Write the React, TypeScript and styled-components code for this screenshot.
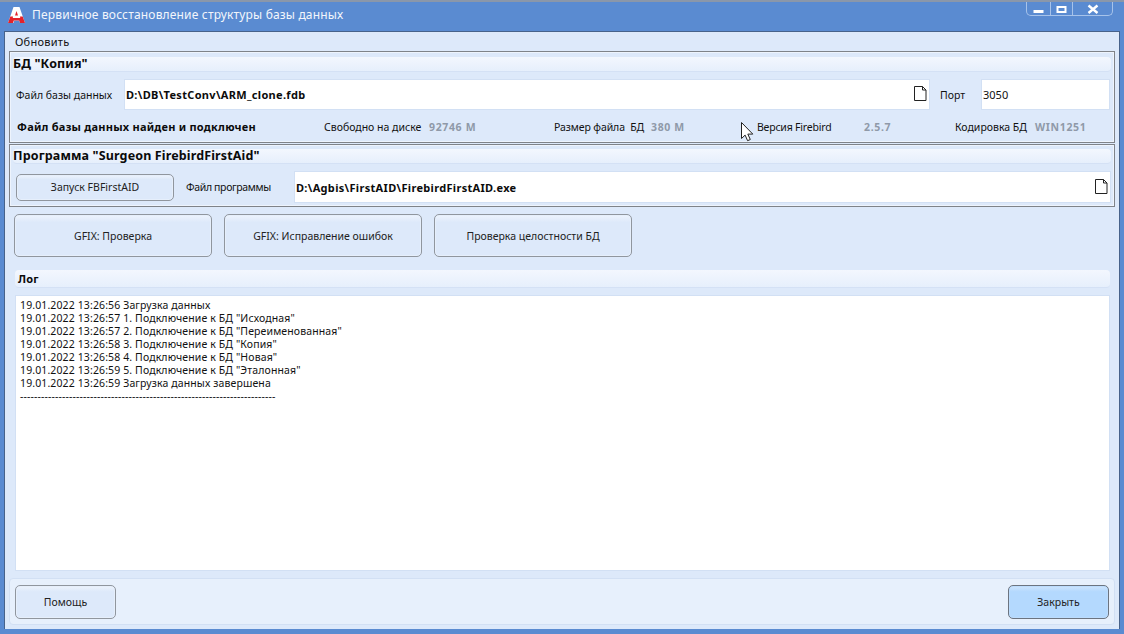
import React from "react";
import styled, { createGlobalStyle } from "styled-components";

const Global = createGlobalStyle`
  html, body { margin: 0; padding: 0; background: #5b8bd0; }
  * { box-sizing: border-box; }
`;

const Win = styled.div`
  position: relative;
  width: 1124px;
  height: 634px;
  overflow: hidden;
  display: flex;
  flex-direction: column;
  background: #5a8bd1;
  border-top: 2px solid #8a97aa;
  font-family: "Noto Sans", "Liberation Sans", sans-serif;
  font-size: 11px;
  color: #111;
`;
const TitleBar = styled.div`
  height: 29px;
  flex: none;
  display: flex;
  align-items: flex-start;
  padding-left: 8px;
  color: #f2f6fc;
`;
const Logo = styled.svg`
  width: 17px;
  height: 17px;
  margin-top: 5px;
  flex: none;
`;
const Title = styled.div`
  margin: 5px 0 0 7px;
  font-size: 12px;
  line-height: 16px;
  letter-spacing: 0.17px;
  flex: 1;
`;
const WinButtons = styled.div`
  display: flex;
  height: 14px;
  margin-right: 11px;
  border: 1px solid #a7c3ea;
  border-top: none;
  border-radius: 0 0 5px 5px;
`;
const WinBtn = styled.div<{ $w: number }>`
  width: ${(p) => p.$w}px;
  display: flex;
  align-items: flex-start;
  justify-content: center;
  & + & { border-left: 1px solid #a7c3ea; }
`;
const Client = styled.div`
  flex: 1;
  margin: 0 4px 5px 4px;
  background: #dde9fa;
  border: 1px solid #47628a;
  border-bottom: none;
  display: flex;
  flex-direction: column;
  min-height: 0;
`;
const Menu = styled.div`
  height: 19px;
  flex: none;
  padding: 2px 0 0 10px;
  line-height: 15px;
  letter-spacing: 0.25px;
`;
const Group = styled.section<{ $h: number; $pad: number }>`
  height: ${(p) => p.$h}px;
  flex: none;
  margin: 0 4px 1px 4px;
  border: 1px solid #7f8389;
  box-shadow: inset 0 0 0 1px #eef4fd;
  display: flex;
  flex-direction: column;
  padding: ${(p) => p.$pad}px 3px 0 3px;
`;
const Heading = styled.div`
  height: 15px;
  flex: none;
  border-radius: 4px;
  background: linear-gradient(#f3f7fe, #e6effc);
  border-bottom: 1px solid #d4e1f5;
  font-weight: 700;
  font-size: 12.5px;
  line-height: 14px;
  letter-spacing: 0.14px;
  color: #0b0b0b;
`;
const Row = styled.div<{ $top: number }>`
  display: flex;
  align-items: center;
  margin-top: ${(p) => p.$top}px;
`;
const Label = styled.span<{ $ml?: number; $w?: number; $ls?: number }>`
  margin-left: ${(p) => p.$ml ?? 0}px;
  width: ${(p) => (p.$w ? `${p.$w}px` : "auto")};
  flex: none;
  white-space: nowrap;
  font-size: 10.5px;
  letter-spacing: ${(p) => p.$ls ?? 0}px;
`;
const Value = styled.span<{ $w?: number }>`
  width: ${(p) => (p.$w ? `${p.$w}px` : "auto")};
  flex: none;
  font-weight: 700;
  font-size: 10.5px;
  letter-spacing: 0.65px;
  color: #8f99a8;
  white-space: nowrap;
`;
const Strong = styled.span`
  width: 307px;
  margin-left: 4px;
  flex: none;
  font-weight: 700;
  font-size: 11px;
  letter-spacing: 0.23px;
  color: #0b0b0b;
  white-space: nowrap;
`;
const Field = styled.div<{ $w: number; $h: number }>`
  width: ${(p) => p.$w}px;
  height: ${(p) => p.$h}px;
  flex: none;
  background: #fff;
  border: 1px solid #d2e0f4;
  display: flex;
  align-items: center;
  justify-content: space-between;
  padding: 0 2px 0 1px;
`;
const FieldBold = styled.span`
  font-weight: 700;
  font-size: 11px;
  letter-spacing: 0.32px;
  color: #0b0b0b;
`;
const FileIcon = styled.svg`
  width: 13px;
  height: 15px;
  flex: none;
  margin-top: -2px;
`;
const Btn = styled.button<{ $w: number; $h: number; $primary?: boolean; $ml?: number }>`
  width: ${(p) => p.$w}px;
  height: ${(p) => p.$h}px;
  margin-left: ${(p) => p.$ml ?? 0}px;
  flex: none;
  padding: 0;
  border: 1px solid ${(p) => (p.$primary ? "#6c7480" : "#90969e")};
  border-radius: 5px;
  background: ${(p) =>
    p.$primary
      ? "linear-gradient(#cfe5fd 0, #b4d9fe 18%, #b4d9fe 100%)"
      : "linear-gradient(#eef4fd 0, #dde9fa 18%, #dde9fa 100%)"};
  box-shadow: inset 0 0 0 1px ${(p) => (p.$primary ? "#bcdcfd" : "#e6effb")};
  font-family: inherit;
  font-size: 10.5px;
  color: #222;
`;
const Actions = styled.div`
  display: flex;
  gap: 12px;
  margin: 6px 0 0 9px;
  flex: none;
`;
const LogHead = styled(Heading)`
  height: 18px;
  margin: 13px 9px 0 10px;
  padding: 1px 0 0 3px;
  font-size: 11px;
  line-height: 15px;
`;
const LogBox = styled.div`
  height: 276px;
  flex: none;
  margin: 7px 9px 0 10px;
  background: #fff;
  border: 1px solid #d2e0f4;
  padding: 3px 0 0 4px;
  font-size: 10.5px;
  letter-spacing: 0.12px;
  line-height: 13px;
  color: #111;
  white-space: pre;
  overflow: hidden;
`;
const Footer = styled.div`
  height: 47px;
  flex: none;
  margin: 7px 4px 0 4px;
  background: #e7f0fc;
  border: 1px solid #d2e0f4;
  border-radius: 4px;
  display: flex;
  justify-content: space-between;
  align-items: center;
  padding: 0 5px;
`;
const Cursor = styled.svg`
  position: absolute;
  left: 741px;
  top: 120px;
  width: 13px;
  height: 21px;
`;

const log = [
  '19.01.2022 13:26:56 Загрузка данных',
  '19.01.2022 13:26:57 1. Подключение к БД "Исходная"',
  '19.01.2022 13:26:57 2. Подключение к БД "Переименованная"',
  '19.01.2022 13:26:58 3. Подключение к БД "Копия"',
  '19.01.2022 13:26:58 4. Подключение к БД "Новая"',
  '19.01.2022 13:26:59 5. Подключение к БД "Эталонная"',
  '19.01.2022 13:26:59 Загрузка данных завершена',
  '-------------------------------------------------------------------------',
];

const File = () => (
  <FileIcon viewBox="0 0 13 15">
    <path d="M.5.5h8l3.500 3.500v10.500h-11.500z" fill="#fff" stroke="#222" />
    <path d="M8.500.5v3.500h3.500" fill="none" stroke="#222" />
  </FileIcon>
);

export default function App() {
  return (
    <Win>
      <Global />
      <TitleBar>
        <Logo viewBox="0 0 17 17">
          <path d="M5.500 0h6l5.500 16h-5l-.8-2.500H6.300L5.500 16H0z" fill="#fff" />
          <path d="M2.300 9.500h2.700L4.800 11h7.400l-.2-1.500h2.700L17 16h-5l-.8-2.500H5.800L5 16H0z" fill="#e3222b" />
          <path d="M8.500 4L7 8.500h3z" fill="#e3222b" />
        </Logo>
        <Title>Первичное восстановление структуры базы данных</Title>
        <WinButtons>
          <WinBtn $w={23}>
            <svg width="11" height="13" viewBox="0 0 11 13"><rect x="0.500" y="8" width="10" height="3" fill="#fff" /></svg>
          </WinBtn>
          <WinBtn $w={22}>
            <svg width="11" height="13" viewBox="0 0 11 13"><rect x="1.500" y="5" width="8" height="5" fill="none" stroke="#fff" strokeWidth="2" /></svg>
          </WinBtn>
          <WinBtn $w={40}>
            <svg width="12" height="13" viewBox="0 0 12 13"><path d="M1.500 3.500l9 7.500M10.500 3.500l-9 7.500" stroke="#fff" strokeWidth="2.400" fill="none" /></svg>
          </WinBtn>
        </WinButtons>
      </TitleBar>
      <Client>
        <Menu>Обновить</Menu>
        <Group $h={92} $pad={5}>
          <Heading>БД "Копия"</Heading>
          <Row $top={7}>
            <Label $ml={3} $w={108}>Файл базы данных</Label>
            <Field $w={806} $h={31}>
              <FieldBold>D:\DB\TestConv\ARM_clone.fdb</FieldBold>
              <File />
            </Field>
            <Label $ml={10} $w={41}>Порт</Label>
            <Field $w={129} $h={31}><span>3050</span></Field>
          </Row>
          <Row $top={9}>
            <Strong>Файл базы данных найден и подключен</Strong>
            <Label $w={105}>Свободно на диске</Label>
            <Value $w={125}>92746 М</Value>
            <Label $w={97} $ls={-0.1}>Размер файла&nbsp; БД</Label>
            <Value $w={106}>380 М</Value>
            <Label $w={107} $ls={-0.2}>Версия Firebird</Label>
            <Value $w={91}>2.5.7</Value>
            <Label $w={80}>Кодировка БД</Label>
            <Value>WIN1251</Value>
          </Row>
        </Group>
        <Group $h={63} $pad={4}>
          <Heading>Программа "Surgeon FirebirdFirstAid"</Heading>
          <Row $top={7}>
            <Btn $w={158} $h={27} $ml={3}>Запуск FBFirstAID</Btn>
            <Label $ml={12} $w={108} $ls={-0.35}>Файл программы</Label>
            <Field $w={817} $h={32}>
              <FieldBold>D:\Agbis\FirstAID\FirebirdFirstAID.exe</FieldBold>
              <File />
            </Field>
          </Row>
        </Group>
        <Actions>
          <Btn $w={198} $h={43}>GFIX: Проверка</Btn>
          <Btn $w={198} $h={43}>GFIX: Исправление ошибок</Btn>
          <Btn $w={198} $h={43}>Проверка целостности БД</Btn>
        </Actions>
        <LogHead>Лог</LogHead>
        <LogBox>{log.join("\n")}</LogBox>
        <Footer>
          <Btn $w={101} $h={34}>Помощь</Btn>
          <Btn $w={101} $h={34} $primary>Закрыть</Btn>
        </Footer>
      </Client>
      <Cursor viewBox="0 0 13 21">
        <path d="M.5.500v16l3.600-3.400 2.500 5.600 2.700-1.200-2.500-5.400h5z" fill="#fff" stroke="#222" />
      </Cursor>
    </Win>
  );
}
